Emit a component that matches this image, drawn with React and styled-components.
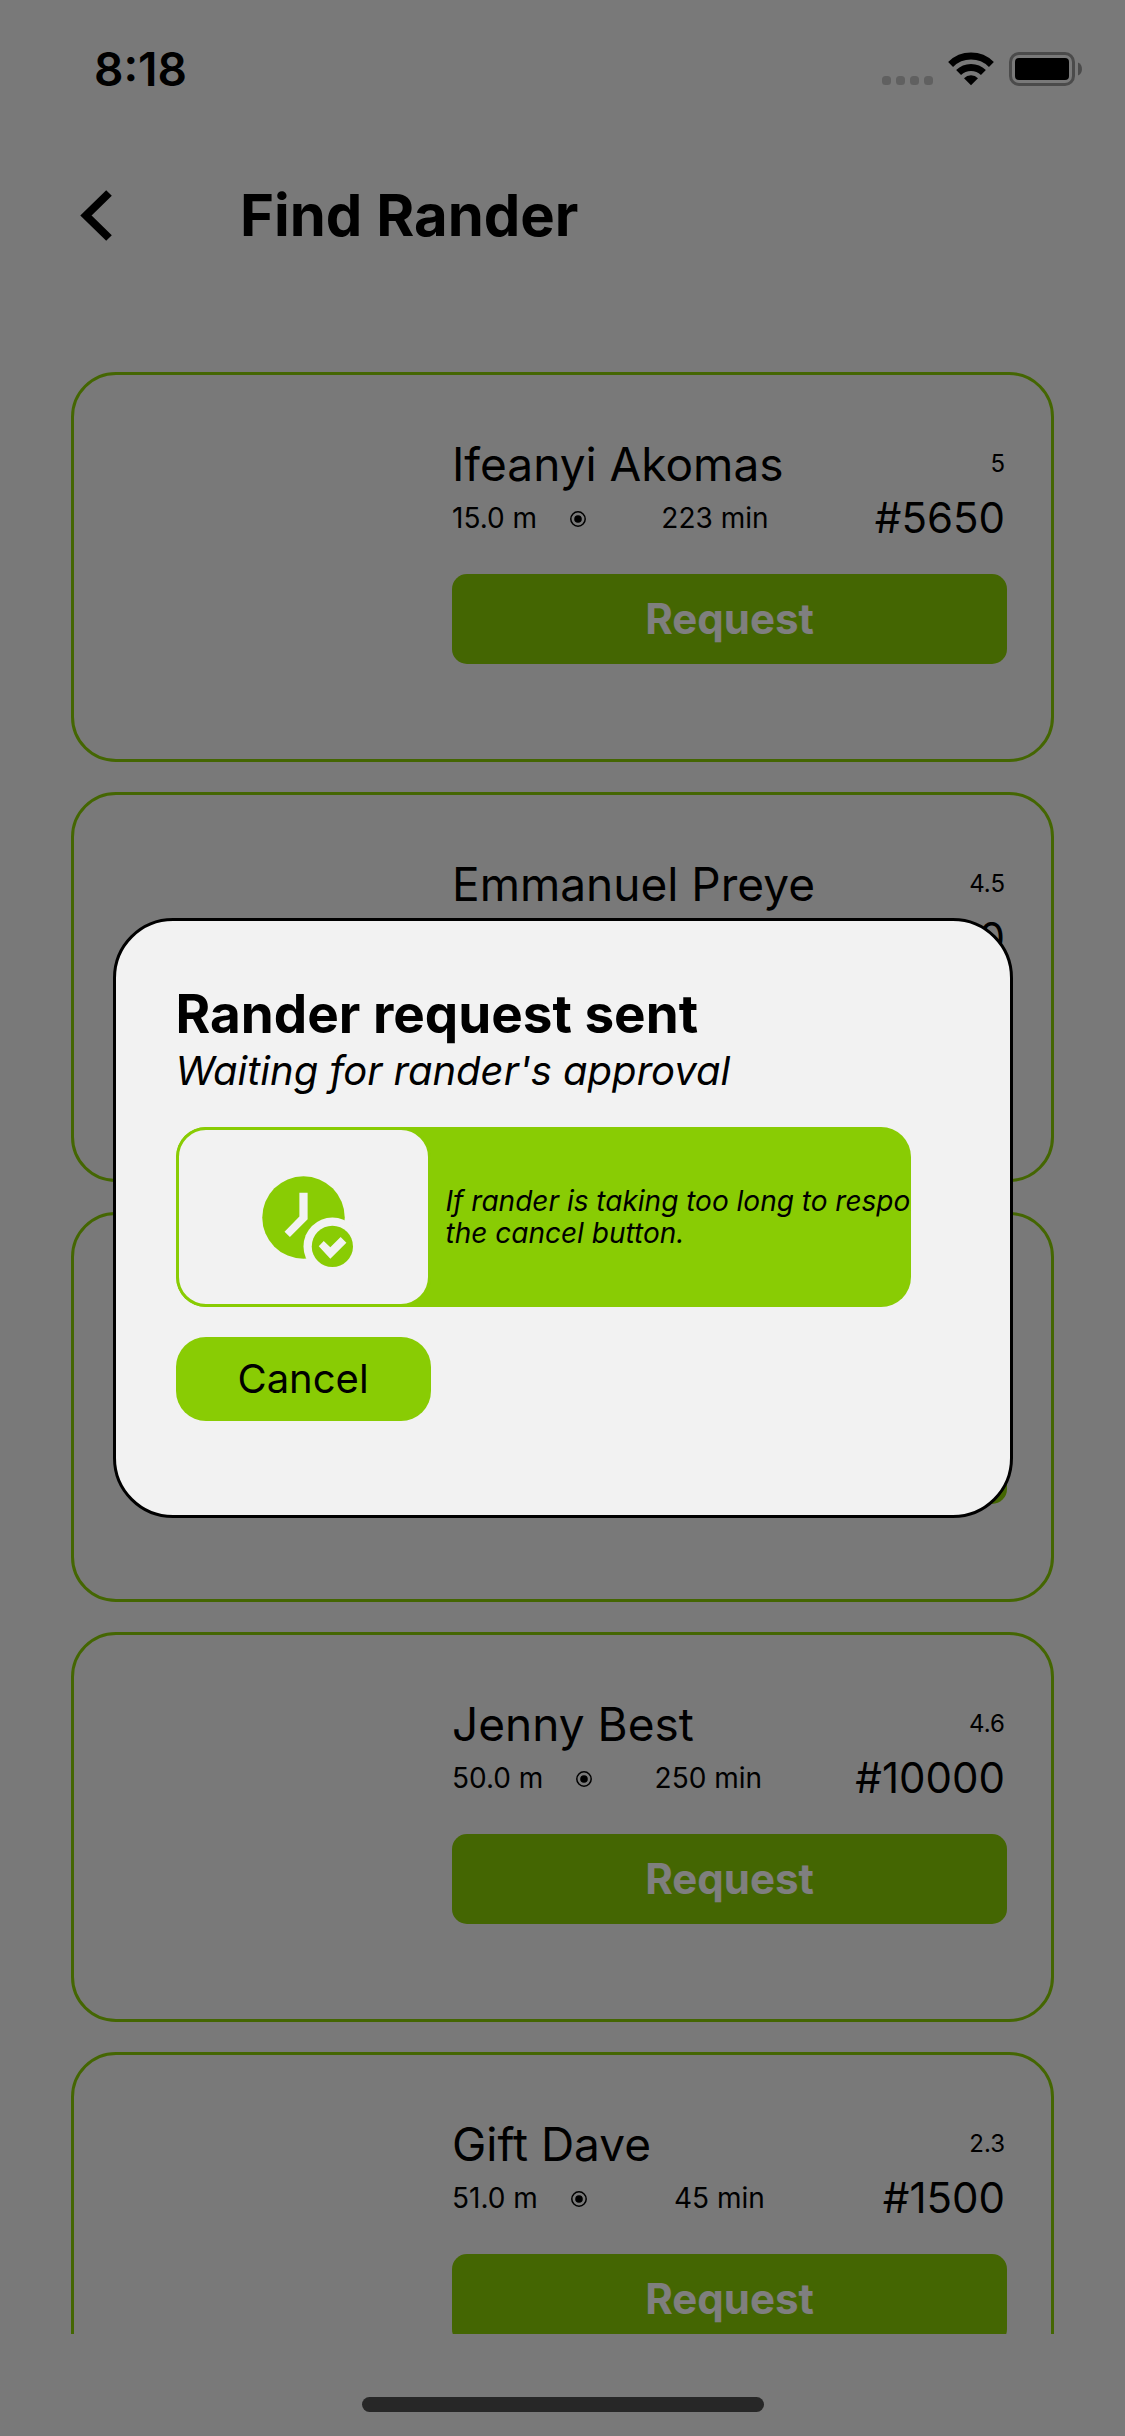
import React from "react";
import styled, { createGlobalStyle } from "styled-components";

const GREEN = "#89cc04";
const SURFACE = "#f2f2f2";

const GlobalStyle = createGlobalStyle`
  *, *::before, *::after { box-sizing: border-box; }
  body {
    margin: 0;
    background: ${SURFACE};
    color: #000;
    font-family: Inter, "Liberation Sans", sans-serif;
  }
  h1, h2, h3, p, ul { margin: 0; padding: 0; }
  button { font-family: inherit; border: 0; padding: 0; cursor: pointer; }
`;

const Screen = styled.div`
  display: flex;
  flex-direction: column;
  height: 100vh;
  background: ${SURFACE};
`;

const StatusBar = styled.div`
  display: flex;
  flex: none;
  align-items: center;
  justify-content: space-between;
  height: 138px;
  padding: 0 42px 0 94px;
`;

const Clock = styled.span`
  font-size: 46px;
  font-weight: 600;
  line-height: 48px;
`;

const StatusIcons = styled.div`
  display: flex;
  align-items: center;
  gap: 15px;
`;

const Header = styled.header`
  display: flex;
  flex: none;
  align-items: center;
  gap: 128px;
  height: 154px;
  padding: 0 80px;
`;

const BackButton = styled.button`
  display: flex;
  color: #000;
  background: none;
`;

const PageTitle = styled.h1`
  font-size: 58px;
  font-weight: 700;
  line-height: 72px;
`;

const List = styled.ul`
  display: flex;
  flex: 1;
  flex-direction: column;
  gap: 30px;
  min-height: 0;
  margin-top: 80px;
  padding: 0 71px;
  overflow-y: auto;
  scrollbar-width: none;
  list-style: none;
`;

const Card = styled.li`
  display: grid;
  flex: none;
  grid-template-columns: 378px 1fr;
  padding: 60px 44px 95px 0;
  border: 3px solid ${GREEN};
  border-radius: 45px;
`;

const Photo = styled.div``;

const Row = styled.div`
  display: flex;
  align-items: center;
  justify-content: space-between;
  height: ${(p) => p.$height}px;
  padding-right: 2px;
`;

const Name = styled.h2`
  font-size: 46px;
  font-weight: 400;
  line-height: 58px;
`;

const Rating = styled.span`
  font-size: 24px;
  line-height: 32px;
`;

const Detail = styled.span`
  font-size: 28px;
  line-height: 32px;
`;

const Distance = styled.div`
  display: flex;
  align-items: center;
  gap: 32px;
`;

const Price = styled.span`
  padding-left: 32px;
  font-size: 42px;
  line-height: 50px;
`;

const RequestButton = styled.button`
  display: block;
  width: 100%;
  height: 90px;
  margin-top: 31px;
  padding-bottom: 2px;
  border-radius: 15px;
  background: ${GREEN};
  color: #fff;
  font-size: 42px;
  font-weight: 700;
`;

const HomeArea = styled.footer`
  display: flex;
  flex: none;
  align-items: flex-end;
  justify-content: center;
  height: 102px;
  padding-bottom: 24px;
`;

const HomeIndicator = styled.div`
  width: 402px;
  height: 15px;
  border-radius: 8px;
  background: #4e4e4e;
`;

const Scrim = styled.div`
  position: fixed;
  inset: 0;
  display: flex;
  align-items: center;
  justify-content: center;
  background: rgba(0, 0, 0, 0.5);
`;

const Dialog = styled.section`
  width: 80%;
  padding: 60px 60px 94px;
  border: 3px solid #000;
  border-radius: 60px;
  background: ${SURFACE};
`;

const DialogTitle = styled.h2`
  font-size: 53px;
  font-weight: 700;
  line-height: 66px;
`;

const DialogSubtitle = styled.p`
  font-size: 40px;
  font-style: italic;
  line-height: 48px;
`;

const Notice = styled.div`
  display: flex;
  width: 735px;
  max-width: 100%;
  height: 180px;
  margin-top: 32px;
  overflow: hidden;
  border-radius: 30px;
  background: ${GREEN};
`;

const NoticeIcon = styled.div`
  display: flex;
  flex: none;
  align-items: center;
  justify-content: center;
  width: 255px;
  border: 3px solid ${GREEN};
  border-radius: 30px;
  background: ${SURFACE};
`;

const NoticeText = styled.p`
  align-self: center;
  padding-left: 15px;
  font-size: 28px;
  font-style: italic;
  line-height: 32px;
  white-space: nowrap;
`;

const CancelButton = styled.button`
  display: block;
  width: 255px;
  height: 84px;
  margin-top: 30px;
  padding-bottom: 2px;
  border-radius: 30px;
  background: ${GREEN};
  color: #000;
  font-size: 40px;
`;

const SignalDots = () => (
  <svg width="51" height="34" viewBox="0 0 51 34" fill="#c0c0c0" aria-hidden="true">
    {[0, 14, 28, 42].map((x) => (
      <rect key={x} x={x} y="24" width="9" height="9" rx="3.5" />
    ))}
  </svg>
);

const WifiIcon = () => (
  <svg width="46" height="34" viewBox="0 0 46 34" aria-hidden="true">
    <g fill="none" stroke="#000" strokeWidth="7">
      <path d="M2.6 12.4a29 29 0 0 1 40.8 0" />
      <path d="M10.6 20.6a17.6 17.6 0 0 1 24.8 0" />
    </g>
    <path d="M16 26.2a10 10 0 0 1 14 0L23 33.2z" />
  </svg>
);

const BatteryIcon = () => (
  <svg width="74" height="34" viewBox="0 0 74 34" aria-hidden="true">
    <rect x="1.5" y="1.5" width="63" height="31" rx="8.5" fill="none" stroke="#969696" strokeWidth="3" />
    <rect x="6" y="6" width="54" height="22" rx="4" />
    <path d="M69 10.5c5.3 2 5.3 11 0 13z" fill="#969696" />
  </svg>
);

const BackIcon = () => (
  <svg width="32" height="51" viewBox="0 0 32 51" aria-hidden="true">
    <path d="M29 3L6 25.5L29 48" fill="none" stroke="#000" strokeWidth="8" />
  </svg>
);

const TargetIcon = () => (
  <svg width="18" height="18" viewBox="0 0 18 18" aria-hidden="true">
    <circle cx="9" cy="10" r="7.2" fill="none" stroke="#000" strokeWidth="1.5" />
    <circle cx="9" cy="10" r="3.8" />
  </svg>
);

const ClockCheckIcon = () => (
  <svg width="99" height="99" viewBox="0 0 24 24" aria-hidden="true">
    <circle cx="12" cy="12" r="10" fill={GREEN} />
    <path d="M11 6h2v6.45l-4.3 4.3-1.3-1.3 3.6-3.7z" fill={SURFACE} />
    <circle cx="19" cy="19" r="7" fill={SURFACE} />
    <circle cx="19" cy="19" r="5" fill={GREEN} />
    <path d="M15.7 18.95l1.2-1.25 1.6 1.5L21 16.7l1.4 1.4-3.9 3.9z" fill={SURFACE} />
  </svg>
);

const randers = [
  { name: "Ifeanyi Akomas", rating: "5", distance: "15.0 m", time: "223 min", price: "#5650" },
  { name: "Emmanuel Preye", rating: "4.5", distance: "21.0 m", time: "120 min", price: "#2500" },
  { name: "Daniel Obi", rating: "4.2", distance: "32.0 m", time: "180 min", price: "#3000" },
  { name: "Jenny Best", rating: "4.6", distance: "50.0 m", time: "250 min", price: "#10000" },
  { name: "Gift Dave", rating: "2.3", distance: "51.0 m", time: "45 min", price: "#1500" },
];

function RanderCard({ name, rating, distance, time, price }) {
  return (
    <Card>
      <Photo />
      <div>
        <Row $height={58}>
          <Name>{name}</Name>
          <Rating>{rating}</Rating>
        </Row>
        <Row $height={50}>
          <Distance>
            <Detail>{distance}</Detail>
            <TargetIcon />
          </Distance>
          <Detail>{time}</Detail>
          <Price>{price}</Price>
        </Row>
        <RequestButton type="button">Request</RequestButton>
      </div>
    </Card>
  );
}

export default function App() {
  return (
    <>
      <GlobalStyle />
      <Screen>
        <StatusBar>
          <Clock>8:18</Clock>
          <StatusIcons>
            <SignalDots />
            <WifiIcon />
            <BatteryIcon />
          </StatusIcons>
        </StatusBar>
        <Header>
          <BackButton type="button" aria-label="Back">
            <BackIcon />
          </BackButton>
          <PageTitle>Find Rander</PageTitle>
        </Header>
        <List>
          {randers.map((r) => (
            <RanderCard key={r.name} {...r} />
          ))}
        </List>
        <HomeArea>
          <HomeIndicator />
        </HomeArea>
      </Screen>
      <Scrim>
        <Dialog role="dialog" aria-modal="true" aria-labelledby="dialog-title">
          <DialogTitle id="dialog-title">Rander request sent</DialogTitle>
          <DialogSubtitle>Waiting for rander's approval</DialogSubtitle>
          <Notice>
            <NoticeIcon>
              <ClockCheckIcon />
            </NoticeIcon>
            <NoticeText>
              If rander is taking too long to respond, press
              <br />
              the cancel button.
            </NoticeText>
          </Notice>
          <CancelButton type="button">Cancel</CancelButton>
        </Dialog>
      </Scrim>
    </>
  );
}
